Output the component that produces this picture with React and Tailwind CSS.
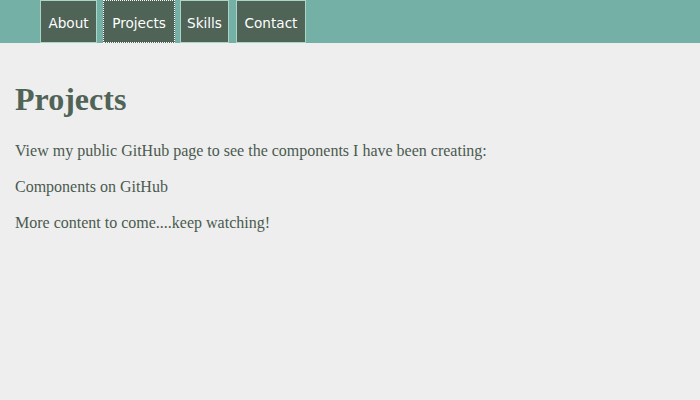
export default function App() {
  const links = [
    { label: "About", width: "w-[57px]", gap: "" },
    { label: "Projects", width: "w-[72px]", gap: "ml-[6px]" },
    { label: "Skills", width: "w-[49px]", gap: "ml-[5px]" },
    { label: "Contact", width: "w-[70px]", gap: "ml-[7px]" },
  ];

  return (
    <div className="min-h-[400px] bg-[#eeeeee]">
      <nav className="flex h-[43px] items-stretch bg-[#74b0a6] pl-10">
        {links.map((link) => (
          <a
            key={link.label}
            href="#"
            className={`${link.width} ${link.gap} flex items-center justify-center border ${
              link.label === "Projects" ? "border-dotted border-white" : "border-[#a9d6c6]"
            } bg-[#4f6356] pt-[3px] text-[13.6px] text-white`}
            style={{ fontFamily: '"DejaVu Sans", sans-serif' }}
          >
            {link.label}
          </a>
        ))}
      </nav>

      <main
        className="px-[15px] text-[#4a5a4f]"
        style={{ fontFamily: '"Liberation Serif", serif' }}
      >
        <h1 className="pt-[38px] text-[32px] font-bold leading-[36px] text-[#4f6356]">
          Projects
        </h1>
        <p className="mt-[24px] text-[16px] leading-5">
          View my public GitHub page to see the components I have been creating:
        </p>
        <p className="mt-4 text-[16px] leading-5">
          <a href="#">Components on GitHub</a>
        </p>
        <p className="mt-4 text-[16px] leading-5">
          More content to come....keep watching!
        </p>
      </main>
    </div>
  );
}
